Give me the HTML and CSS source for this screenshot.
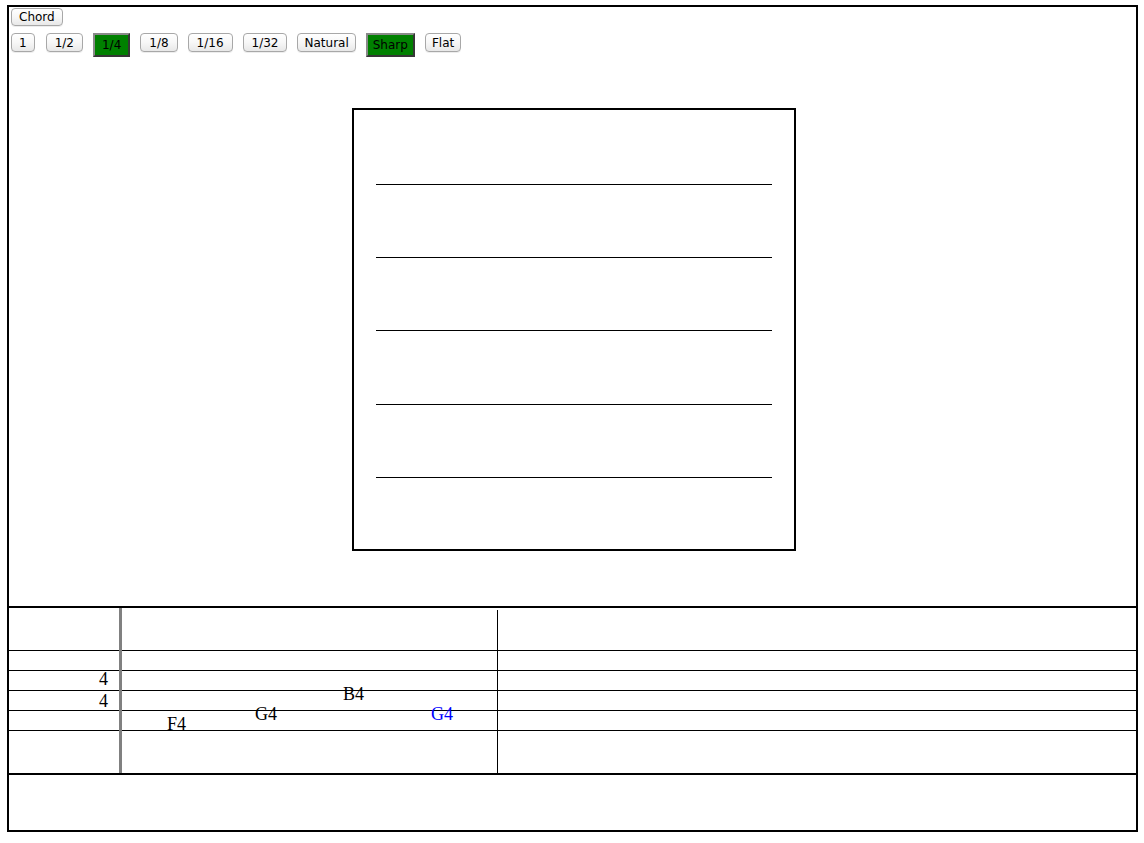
FILE: index.html
```html
<!DOCTYPE html>
<html lang="en">
<head>
<meta charset="utf-8">
<title>Score editor</title>
<link rel="stylesheet" href="styles.css">
</head>
<body>
<div class="app">
  <section class="editor">
    <div class="toolbar">
      <div class="tool-row">
        <button class="btn btn-chord">Chord</button>
      </div>
      <div class="tool-row">
        <button class="btn btn-frac btn-whole">1</button>
        <button class="btn btn-frac">1/2</button>
        <button class="btn btn-frac btn-on">1/4</button>
        <button class="btn btn-frac">1/8</button>
        <button class="btn btn-frac">1/16</button>
        <button class="btn btn-frac">1/32</button>
        <button class="btn">Natural</button>
        <button class="btn btn-on">Sharp</button>
        <button class="btn">Flat</button>
      </div>
    </div>
    <div class="stage">
      <div class="staff-box">
        <svg class="staff-svg" width="440" height="439" viewBox="0 0 440 439">
          <line x1="22" y1="74.5" x2="418" y2="74.5"/>
          <line x1="22" y1="147.5" x2="418" y2="147.5"/>
          <line x1="22" y1="220.5" x2="418" y2="220.5"/>
          <line x1="22" y1="294.5" x2="418" y2="294.5"/>
          <line x1="22" y1="367.5" x2="418" y2="367.5"/>
        </svg>
      </div>
    </div>
  </section>

  <section class="score">
    <div class="score-lines">
      <div class="space-top"></div>
      <div class="staff-row"></div>
      <div class="staff-row"></div>
      <div class="staff-row"></div>
      <div class="staff-row"></div>
      <div class="space-bottom"></div>
    </div>
    <div class="bar bar-clef"></div>
    <div class="bar bar-measure"></div>
    <span class="glyph" style="left:90px;top:62px">4</span>
    <span class="glyph" style="left:90px;top:84px">4</span>
    <span class="glyph" style="left:158px;top:107px">F4</span>
    <span class="glyph" style="left:246px;top:97px">G4</span>
    <span class="glyph" style="left:334px;top:77px">B4</span>
    <span class="glyph glyph-active" style="left:422px;top:97px">G4</span>
  </section>

  <section class="footer"></section>
</div>
</body>
</html>
```

FILE: styles.css
```css
html, body {
  margin: 0;
  padding: 0;
  background: #ffffff;
}

body {
  font-family: "DejaVu Sans", sans-serif;
}

.app {
  margin: 5px 0 0 7px;
  width: 1127px;
  border: 2px solid #000000;
}

.editor {
  height: 599px;
  display: flex;
  flex-direction: column;
}

.toolbar {
  padding: 1px 0 0 2px;
  display: flex;
  flex-direction: column;
  gap: 7px;
}

.tool-row {
  display: flex;
  align-items: flex-start;
  gap: 10px;
}

.btn {
  font: 12px/1 "DejaVu Sans", sans-serif;
  color: #000000;
  height: 19px;
  padding: 0 6px;
  margin: 0;
  border: 1px solid #a8a8a8;
  border-radius: 4px;
  background: linear-gradient(#ffffff, #f7f7f7 50%, #e8e8e8);
  box-shadow: 0 1px 0 rgba(0, 0, 0, 0.07);
}

.btn-chord {
  height: 18px;
  padding: 0 7px;
}

.btn-frac {
  padding: 0 8px;
}

.btn-whole {
  padding: 0 7px;
  margin-right: 1px;
}

.btn-on {
  height: 24px;
  border: 2px outset #8a8a8a;
  border-radius: 0;
  background: #008000;
  box-shadow: none;
}

.btn-frac.btn-on {
  padding: 0 7px;
}

.btn-on:not(.btn-frac) {
  padding: 0 5px;
}

.stage {
  margin-top: 51px;
  padding-left: 3px;
  display: flex;
  justify-content: center;
}

.staff-box {
  width: 440px;
  height: 439px;
  border: 2px solid #000000;
}

.staff-svg {
  display: block;
}

.staff-svg line {
  stroke: #000000;
  stroke-width: 1;
}

.score {
  position: relative;
  height: 165px;
  border-top: 2px solid #000000;
  border-bottom: 2px solid #000000;
}

.score-lines {
  display: flex;
  flex-direction: column;
  height: 100%;
}

.space-top {
  height: 42px;
}

.staff-row {
  height: 19px;
  border-top: 1px solid #000000;
}

.space-bottom {
  flex: 1;
  border-top: 1px solid #000000;
}

.bar {
  position: absolute;
  bottom: 0;
}

.bar-clef {
  left: 110px;
  top: 0;
  width: 3px;
  background: #808080;
}

.bar-measure {
  left: 488px;
  top: 2px;
  width: 1px;
  background: #000000;
}

.glyph {
  position: absolute;
  font: 18px/18px "Liberation Serif", "Times New Roman", serif;
  color: #000000;
  white-space: nowrap;
}

.glyph-active {
  color: #0000ff;
}

.footer {
  height: 55px;
}
```
